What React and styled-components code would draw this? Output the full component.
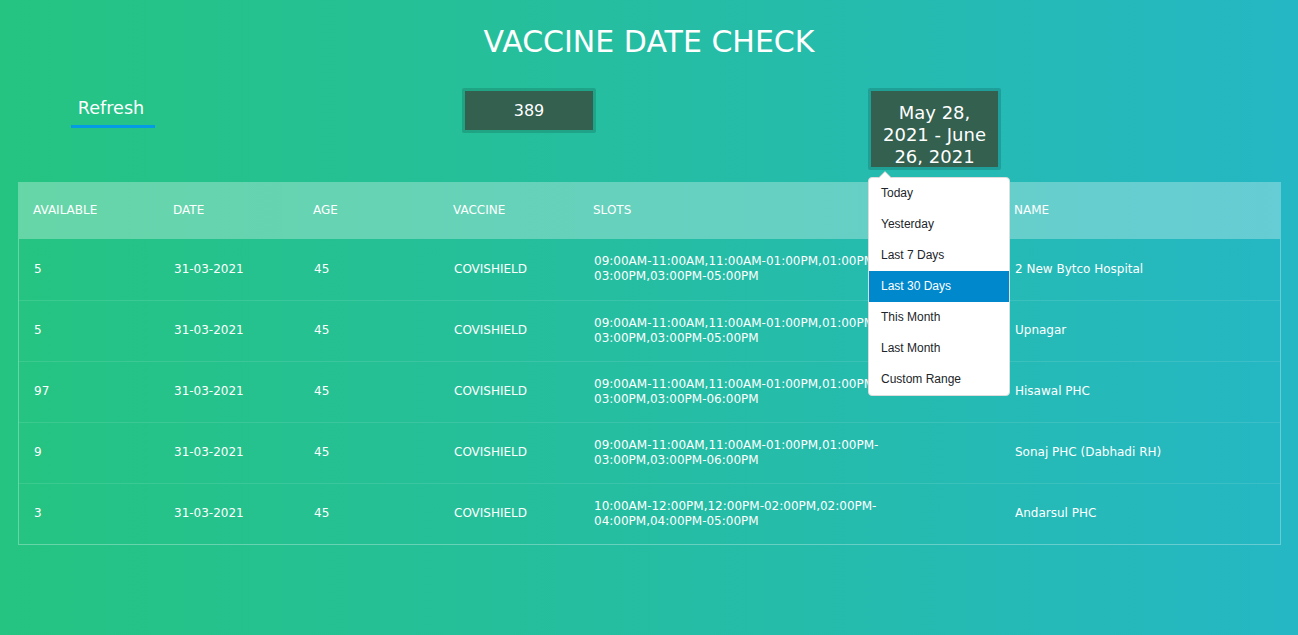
import React, { useState } from 'react';
import styled, { createGlobalStyle } from 'styled-components';

const rows = [
  { available: 5, date: '31-03-2021', age: 45, vaccine: 'COVISHIELD', slots: '09:00AM-11:00AM,11:00AM-01:00PM,01:00PM-03:00PM,03:00PM-05:00PM', name: '2 New Bytco Hospital' },
  { available: 5, date: '31-03-2021', age: 45, vaccine: 'COVISHIELD', slots: '09:00AM-11:00AM,11:00AM-01:00PM,01:00PM-03:00PM,03:00PM-05:00PM', name: 'Upnagar' },
  { available: 97, date: '31-03-2021', age: 45, vaccine: 'COVISHIELD', slots: '09:00AM-11:00AM,11:00AM-01:00PM,01:00PM-03:00PM,03:00PM-06:00PM', name: 'Hisawal PHC' },
  { available: 9, date: '31-03-2021', age: 45, vaccine: 'COVISHIELD', slots: '09:00AM-11:00AM,11:00AM-01:00PM,01:00PM-03:00PM,03:00PM-06:00PM', name: 'Sonaj PHC (Dabhadi RH)' },
  { available: 3, date: '31-03-2021', age: 45, vaccine: 'COVISHIELD', slots: '10:00AM-12:00PM,12:00PM-02:00PM,02:00PM-04:00PM,04:00PM-05:00PM', name: 'Andarsul PHC' },
];

const ranges = ['Today', 'Yesterday', 'Last 7 Days', 'Last 30 Days', 'This Month', 'Last Month', 'Custom Range'];

// 표 컬럼 너비
const colWidths = [140, 140, 140, 140, 421, null];

const Cols = () => (
  <colgroup>
    {colWidths.map((w, i) => (
      <col key={i} style={w ? { width: w } : undefined} />
    ))}
  </colgroup>
);

const App = () => {
  const [range, setRange] = useState('Last 30 Days');

  return (
    <>
      <GlobalStyle />
      <Page>
        <Title>Vaccine Date Check</Title>
        <Controls>
          <RefreshBtn>Refresh</RefreshBtn>
          <CountBox $offset={307}>389</CountBox>
          <DateWrap $offset={272}>
            <DateBox>May 28, 2021 - June 26, 2021</DateBox>
            <RangeMenu>
              {ranges.map((r) => (
                <RangeItem key={r} $active={r === range} onClick={() => setRange(r)}>
                  {r}
                </RangeItem>
              ))}
            </RangeMenu>
          </DateWrap>
        </Controls>

        <TableArea>
          <HeadTable>
            <Cols />
            <thead>
              <tr>
                <Th>Available</Th>
                <Th>Date</Th>
                <Th>Age</Th>
                <Th>Vaccine</Th>
                <Th>Slots</Th>
                <Th>Name</Th>
              </tr>
            </thead>
          </HeadTable>
          <BodyWrap>
            <BodyTable>
              <Cols />
              <tbody>
                {rows.map((row, i) => (
                  <Tr key={i}>
                    <Td>{row.available}</Td>
                    <Td>{row.date}</Td>
                    <Td>{row.age}</Td>
                    <Td>{row.vaccine}</Td>
                    <Td>{row.slots}</Td>
                    <Td>{row.name}</Td>
                  </Tr>
                ))}
              </tbody>
            </BodyTable>
          </BodyWrap>
        </TableArea>
      </Page>
    </>
  );
};

export default App;

const GlobalStyle = createGlobalStyle`
  html, body {
    margin: 0;
    min-height: 100%;
  }
  body {
    min-height: 100vh;
    background: linear-gradient(to right, #25c481, #25b7c4);
    font-family: 'DejaVu Sans', sans-serif;
    color: #fff;
  }
`;
const Page = styled.div`
  padding-top: 24px;
`;
const Title = styled.h1`
  margin: 0;
  text-align: center;
  text-transform: uppercase;
  font-size: 30px;
  font-weight: normal;
  line-height: 35px;
  color: #fff;
`;
const Controls = styled.div`
  display: flex;
  align-items: flex-start;
  margin-top: 29px;
  padding-left: 71px;
`;
const RefreshBtn = styled.button`
  width: 84px;
  padding: 10px 4px 7px 0;
  border: none;
  border-bottom: 3px solid #039be5;
  background: none;
  color: #fff;
  font-family: 'DejaVu Sans', sans-serif;
  font-size: 17.6px;
  line-height: 20px;
  text-align: center;
  cursor: pointer;
`;
const CountBox = styled.div`
  margin-left: ${(p) => p.$offset}px;
  width: 128px;
  padding: 10px 0;
  border: 3px solid rgba(0, 0, 0, 0.14);
  border-radius: 2px;
  background: #33604f;
  background-clip: padding-box;
  color: #fff;
  font-size: 16px;
  line-height: 19px;
  text-align: center;
`;
const DateWrap = styled.div`
  position: relative;
  margin-left: ${(p) => p.$offset}px;
`;
const DateBox = styled.div`
  width: 111px;
  height: 65px;
  padding: 11px 8px 0;
  border: 3px solid rgba(0, 0, 0, 0.14);
  border-radius: 2px;
  background: #33604f;
  background-clip: padding-box;
  color: #fff;
  font-size: 18px;
  line-height: 22px;
  text-align: center;
`;
const RangeMenu = styled.ul`
  position: absolute;
  top: calc(100% + 7px);
  left: 0;
  z-index: 10;
  width: 140px;
  margin: 0;
  padding: 0;
  list-style: none;
  background: #fff;
  border: 1px solid #ddd;
  border-radius: 4px;
  font-family: 'Liberation Sans', Arial, sans-serif;

  &::before {
    content: '';
    position: absolute;
    top: -7px;
    left: 9px;
    border-right: 7px solid transparent;
    border-left: 7px solid transparent;
    border-bottom: 7px solid #ccc;
  }
  &::after {
    content: '';
    position: absolute;
    top: -6px;
    left: 10px;
    border-right: 6px solid transparent;
    border-left: 6px solid transparent;
    border-bottom: 6px solid #fff;
  }
`;
const RangeItem = styled.li`
  height: 31px;
  padding: 0 12px;
  line-height: 31px;
  font-size: 12px;
  color: ${(p) => (p.$active ? '#fff' : '#212529')};
  background: ${(p) => (p.$active ? '#08c' : 'transparent')};
  cursor: pointer;
`;
const TableArea = styled.div`
  margin: 12px 17px 0 18px;
`;
const HeadTable = styled.table`
  width: 100%;
  table-layout: fixed;
  border-collapse: collapse;
  background: rgba(255, 255, 255, 0.3);
`;
const Th = styled.th`
  height: 56px;
  padding: 0 15px;
  box-sizing: border-box;
  text-align: left;
  font-size: 12px;
  font-weight: normal;
  text-transform: uppercase;
  color: #fff;
`;
const BodyWrap = styled.div`
  border: 1px solid rgba(255, 255, 255, 0.3);
`;
const BodyTable = styled.table`
  width: 100%;
  table-layout: fixed;
  border-collapse: collapse;
`;
const Tr = styled.tr`
  border-bottom: 1px solid rgba(255, 255, 255, 0.1);
  &:last-child {
    border-bottom: none;
  }
`;
const Td = styled.td`
  height: 61px;
  padding: 0 15px;
  box-sizing: border-box;
  text-align: left;
  vertical-align: middle;
  font-size: 12px;
  font-weight: normal;
  line-height: 15px;
  color: #fff;
`;
